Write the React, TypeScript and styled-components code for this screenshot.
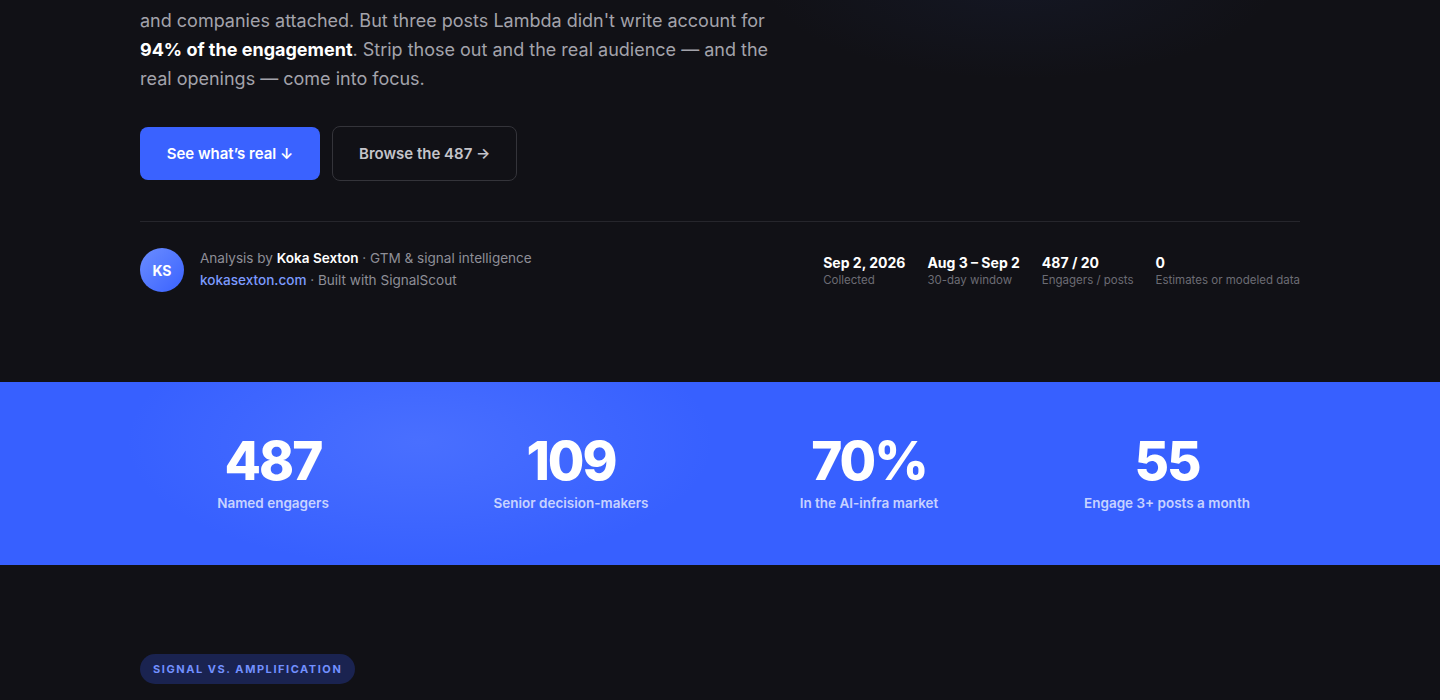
import React from "react";
import styled, { createGlobalStyle } from "styled-components";

const Global = createGlobalStyle`
  html, body { margin: 0; padding: 0; background: #111116; }
  body { font-family: Inter, "Noto Sans", sans-serif; color: #fff; -webkit-font-smoothing: antialiased; }
  * { box-sizing: border-box; }
`;

const Page = styled.div`
  width: 1440px;
  height: 700px;
  overflow: hidden;
  background: #111116;
  position: relative;
`;

const Glow = styled.div`
  position: absolute;
  top: -120px;
  left: 760px;
  width: 520px;
  height: 200px;
  background: radial-gradient(ellipse at center, rgba(40, 60, 120, 0.14), rgba(17, 17, 22, 0) 70%);
  pointer-events: none;
`;

const Hero = styled.section`
  width: 1160px;
  margin: 0 auto;
  padding-top: 6px;
  position: relative;
`;

const Lead = styled.p`
  margin: 0;
  width: 660px;
  font-size: 18px;
  line-height: 29px;
  color: #a3a3ab;
  strong { color: #fff; font-weight: 700; }
`;

const Actions = styled.div`
  display: flex;
  gap: 12px;
  align-items: center;
  margin-top: 33px;
`;

const Button = styled.button<{ $primary?: boolean }>`
  font-family: Inter, sans-serif;
  font-size: 15px;
  font-weight: 600;
  height: ${(p) => (p.$primary ? "53px" : "55px")};
  padding: 0 26px;
  border-radius: 8px;
  cursor: pointer;
  color: ${(p) => (p.$primary ? "#fff" : "#c4c4ca")};
  background: ${(p) => (p.$primary ? "#3a62ff" : "transparent")};
  border: ${(p) => (p.$primary ? "none" : "1px solid #34343a")};
  min-width: ${(p) => (p.$primary ? "180px" : "185px")};
`;

const Divider = styled.hr`
  margin: 40px 0 0;
  border: 0;
  border-top: 1px solid #26262c;
`;

const Byline = styled.div`
  display: flex;
  justify-content: space-between;
  align-items: center;
  padding-top: 26px;
`;

const Author = styled.div`
  display: flex;
  align-items: center;
  gap: 16px;
`;

const Avatar = styled.div`
  width: 44px;
  height: 44px;
  border-radius: 50%;
  background: linear-gradient(135deg, #6b8dff, #3a62ff);
  display: flex;
  align-items: center;
  justify-content: center;
  font-size: 14px;
  font-weight: 700;
  color: #fff;
`;

const AuthorText = styled.div`
  display: flex;
  flex-direction: column;
  gap: 4px;
  padding-bottom: 2px;
`;

const AuthorLine = styled.div`
  font-size: 13.55px;
  line-height: 18px;
  color: #8e8e96;
  strong { color: #fff; font-weight: 600; }
  a { color: #7c9bff; text-decoration: none; font-weight: 500; }
`;

const Meta = styled.div`
  display: flex;
  gap: 22px;
`;

const MetaItem = styled.div`
  display: flex;
  flex-direction: column;
  gap: 1px;
  padding-top: 1px;
`;

const MetaValue = styled.div`
  font-size: 14px;
  font-weight: 700;
  color: #fff;
  line-height: 18px;
`;

const MetaLabel = styled.div`
  font-size: 11.5px;
  color: #6c6c74;
  line-height: 14px;
`;

const Band = styled.section`
  margin-top: 90px;
  height: 183px;
  background:
    radial-gradient(ellipse 420px 180px at 420px 60px, rgba(120, 150, 255, 0.28), rgba(58, 98, 255, 0) 70%),
    #3760ff;
  display: flex;
  align-items: center;
`;

const StatGrid = styled.div`
  width: 1160px;
  margin: 0 auto;
  display: grid;
  grid-template-columns: repeat(4, 1fr);
  column-gap: 32px;
  padding-bottom: 7px;
`;

const Stat = styled.div`
  text-align: center;
`;

const StatValue = styled.div`
  font-size: 53px;
  font-weight: 800;
  letter-spacing: -2px;
  line-height: 64px;
  color: #fff;
`;

const StatLabel = styled.div`
  font-size: 13.5px;
  font-weight: 600;
  color: rgba(226, 232, 255, 0.85);
  margin-top: 2px;
`;

const Next = styled.section`
  width: 1160px;
  margin: 89px auto 0;
`;

const Badge = styled.span`
  display: inline-flex;
  align-items: center;
  height: 30px;
  padding: 0 13px;
  border-radius: 15px;
  background: #1a2350;
  color: #7290ff;
  font-size: 11px;
  font-weight: 700;
  letter-spacing: 1.55px;
`;

const meta = [
  { v: "Sep 2, 2026", l: "Collected" },
  { v: "Aug 3 – Sep 2", l: "30-day window" },
  { v: "487 / 20", l: "Engagers / posts" },
  { v: "0", l: "Estimates or modeled data" },
];

const stats = [
  { v: "487", l: "Named engagers" },
  { v: "109", l: "Senior decision-makers" },
  { v: "70%", l: "In the AI-infra market" },
  { v: "55", l: "Engage 3+ posts a month" },
];

export default function App() {
  return (
    <Page>
      <Global />
      <Glow />
      <Hero>
        <Lead>
          and companies attached. But three posts Lambda didn't write account for{" "}
          <strong>94% of the engagement</strong>. Strip those out and the real audience — and the
          real openings — come into focus.
        </Lead>
        <Actions>
          <Button $primary>See what’s real ↓</Button>
          <Button>Browse the 487 →</Button>
        </Actions>
        <Divider />
        <Byline>
          <Author>
            <Avatar>KS</Avatar>
            <AuthorText>
              <AuthorLine>
                Analysis by <strong>Koka Sexton</strong> · GTM &amp; signal intelligence
              </AuthorLine>
              <AuthorLine>
                <a href="#">kokasexton.com</a> · Built with SignalScout
              </AuthorLine>
            </AuthorText>
          </Author>
          <Meta>
            {meta.map((m) => (
              <MetaItem key={m.l}>
                <MetaValue>{m.v}</MetaValue>
                <MetaLabel>{m.l}</MetaLabel>
              </MetaItem>
            ))}
          </Meta>
        </Byline>
      </Hero>
      <Band>
        <StatGrid>
          {stats.map((s) => (
            <Stat key={s.l}>
              <StatValue>{s.v}</StatValue>
              <StatLabel>{s.l}</StatLabel>
            </Stat>
          ))}
        </StatGrid>
      </Band>
      <Next>
        <Badge>SIGNAL VS. AMPLIFICATION</Badge>
      </Next>
    </Page>
  );
}
